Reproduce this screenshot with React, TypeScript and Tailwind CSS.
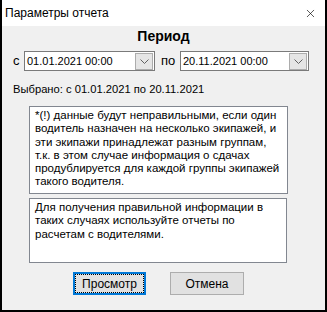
import { X } from 'lucide-react'

const font = { fontFamily: '"Liberation Sans", Arial, sans-serif' }

const warning = [
  '*(!) данные будут неправильными, если один',
  'водитель назначен на несколько экипажей, и',
  'эти экипажи принадлежат разным группам,',
  'т.к. в этом случае информация о сдачах',
  'продублируется для каждой группы экипажей',
  'такого водителя.',
]

const hint = [
  'Для получения правильной информации в',
  'таких случаях используйте отчеты по',
  'расчетам с водителями.',
]

function Combo({ value, className }: { value: string; className: string }) {
  return (
    <div className={`flex h-[20px] items-center border border-[#7a7a7a] bg-white pl-[2px] pr-[1px] ${className}`}>
      <span className="flex-1 text-[11px] leading-[14px] text-black">{value}</span>
      <div className="flex h-[17px] w-[18px] items-center justify-center border border-[#acacac] bg-[#e5e5e5]">
        <svg width="9" height="5" viewBox="0 0 9 5">
          <path d="M0.5 0.5 L4.5 4.5 L8.5 0.5" fill="none" stroke="#606060" strokeWidth="1" />
        </svg>
      </div>
    </div>
  )
}

function Lines({ lines }: { lines: string[] }) {
  return (
    <>
      {lines.map((line) => (
        <div key={line} className="h-[13.3px] whitespace-nowrap text-[11.5px] leading-[13.3px]">
          {line}
        </div>
      ))}
    </>
  )
}

export default function App() {
  return (
    <div className="flex h-[312px] w-[327px] flex-col border-x-2 border-b-2 border-black bg-[#f0f0f0] text-[12px] text-black" style={font}>
      <div className="flex h-[26px] items-center justify-between bg-white pl-[3px] pr-[8px]">
        <span className="text-[12px] leading-[14px]">Параметры отчета</span>
        <X size={13} strokeWidth={1.2} className="text-black" />
      </div>

      <div className="mt-[2px] text-center text-[14px] font-bold leading-[16px]">Период</div>

      <div className="mt-[7px] flex items-center">
        <span className="ml-[11px] w-[11px] text-[13px]">с</span>
        <Combo value="01.01.2021 00:00" className="w-[131px]" />
        <span className="ml-[6px] w-[19px] text-[13px]">по</span>
        <Combo value="20.11.2021 00:00" className="w-[129px]" />
      </div>

      <div className="mt-[11px] ml-[11px] text-[11.2px] leading-[15px]">Выбрано: с 01.01.2021 по 20.11.2021</div>

      <div className="mt-[9px] ml-[27px] h-[88px] w-[259px] border border-[#828790] bg-white px-[5px] pt-[2px]">
        <Lines lines={warning} />
      </div>

      <div className="mt-[4px] ml-[27px] h-[65px] w-[258px] border border-[#828790] bg-white px-[5px] pt-[2px]">
        <Lines lines={hint} />
      </div>

      <div className="mt-[9px] flex">
        <button className="ml-[71px] flex h-[23px] w-[73px] items-center justify-center border-2 border-[#0078d7] bg-[#e1e1e1] p-0">
          <span className="flex h-full w-full items-center justify-center border border-dotted border-black">Просмотр</span>
        </button>
        <button className="ml-[24px] flex h-[23px] w-[74px] items-center justify-center border border-[#adadad] bg-[#e1e1e1]">
          Отмена
        </button>
      </div>
    </div>
  )
}
